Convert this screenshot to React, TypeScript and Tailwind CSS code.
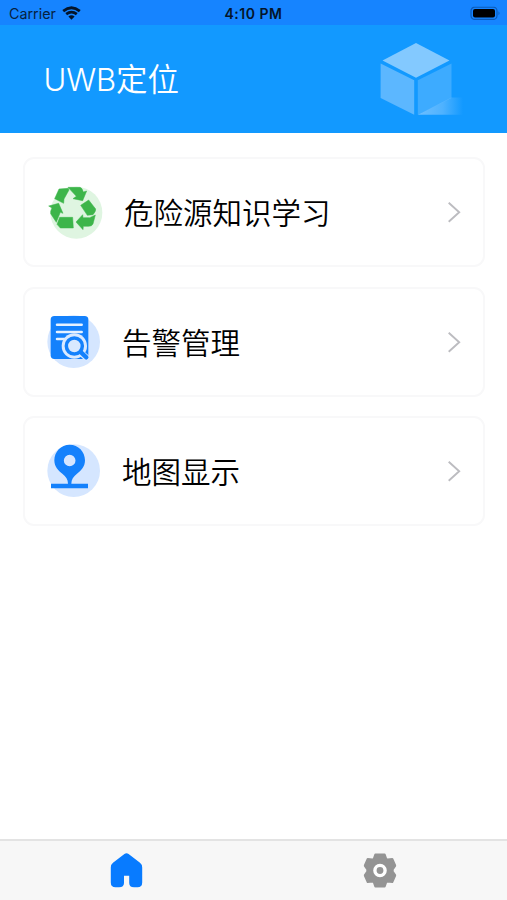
import type { ReactNode } from "react";

function RecycleIcon() {
  return (
    <svg className="h-[55px] w-[56px]" viewBox="96 105 168 165">
      <circle cx="184" cy="188" r="78" fill="#dff5e1" />
      <g transform="translate(87 90)" fill="#3db54a" stroke="#3db54a" strokeWidth="1.5" strokeLinejoin="round">
        <path d="M45 27 L73 25 L75 30 L60 57 L59 70 L32 56 Z" />
        <path d="M72 22 L108 22 Q114 23 118 36 L128 33 L116 62 L87 56 L97 49 Z" />
        <path d="M110 76 L134 60 L155 87 Q156 94 147 104 L130 106 Z" />
        <path d="M154 105 L147 132 Q144 139 134 139 L118 139 L117 149 L96 126 L116 104 L117 113 L137 113 Z" />
        <path d="M47 112 L86 112 L88 144 L49 144 L39 133 Z" />
        <path d="M14 78 L44 70 L57 100 L49 97 L37 127 L20 101 Q18 95 24 84 Z" />
      </g>
    </svg>
  );
}

function AlarmIcon() {
  return (
    <svg className="h-[55px] w-[56px] translate-y-[1px]" viewBox="96 105 168 165">
      <circle cx="176" cy="185" r="79" fill="#d5e6ff" />
      <rect x="107" y="108" width="113" height="129" rx="11" fill="#1481fc" />
      <g stroke="#e6f1ff" strokeWidth="7.5" strokeLinecap="round">
        <path d="M126 134 H200" />
        <path d="M126 156 H200" />
        <path d="M126 177 H152" />
      </g>
      <circle cx="178" cy="198" r="38" fill="#d9e9ff" />
      <path d="M193 214 L214 233" stroke="#d9e9ff" strokeWidth="19" strokeLinecap="round" />
      <path d="M195 214 L214 232" stroke="#1481fc" strokeWidth="13" strokeLinecap="round" />
      <circle cx="178" cy="198" r="24" fill="#d9e9ff" stroke="#1481fc" strokeWidth="10.5" />
    </svg>
  );
}

function MapIcon() {
  return (
    <svg className="h-[55px] w-[56px]" viewBox="96 105 168 165">
      <circle cx="176" cy="185" r="79" fill="#d5e6ff" />
      <path
        fill="#1481fc"
        fillRule="evenodd"
        transform="translate(0 1)"
        d="M164 106 C138 106 118 127 118 153 C118 173 130 184 142 193 C153 202 159 210 159 223 H108 V237 H219 V223 H169 C169 210 175 202 186 193 C198 184 210 173 210 153 C210 127 190 106 164 106 Z M164 136 A17.5 17.5 0 1 1 164 171 A17.5 17.5 0 1 1 164 136 Z"
      />
    </svg>
  );
}

function MenuCard({ icon, label, indent }: { icon: ReactNode; label: string; indent: string }) {
  return (
    <button className="flex h-[110px] w-full items-center rounded-[11px] border-2 border-[#f8f8f9] bg-white pr-[21.5px] pl-[22.5px] text-left">
      {icon}
      <span className={`${indent} flex-1 pb-[2px] text-[29.5px] leading-[44px] font-[350] text-black`}>{label}</span>
      <svg className="h-[22px] w-[14px]" viewBox="0 0 14 22" fill="none" stroke="#bcbcc0" strokeWidth="1.9">
        <path d="M1.7 1.8 L12.2 11.3 L1.7 20.8" />
      </svg>
    </button>
  );
}

function StatusBar() {
  return (
    <div className="grid h-[25px] grid-cols-3 items-center bg-[#1684ff] pt-[3px] text-[#06223f]">
      <div className="flex items-center gap-[6px] pl-[9px] font-['Inter'] text-[14.3px] leading-none">
        <span>Carrier</span>
        <svg className="h-[14px] w-[19px] -translate-y-[1px]" viewBox="0 0 19 14" fill="none" stroke="#04152a" strokeWidth="2.8">
          <path d="M1.2 5.1 Q9.5 -1.5 17.8 5.1" />
          <path d="M4.2 8.2 Q9.5 4 14.8 8.2" />
          <path d="M6.4 10.5 Q9.5 8.2 12.6 10.5 L9.5 13.7 Z" fill="#04152a" stroke="none" />
        </svg>
      </div>
      <div className="text-center font-['Inter'] text-[14px] leading-none font-semibold tracking-[0.5px] text-[#04152a]">4:10 PM</div>
      <div className="flex justify-end pr-[6px]">
        <svg className="h-[14px] w-[31px] -translate-y-[0.5px]" viewBox="0 0 31 14">
          <rect x="1" y="0.7" width="26" height="12.2" rx="3.7" fill="none" stroke="#0c5bb8" strokeWidth="1.2" />
          <rect x="3" y="2.6" width="22" height="8.5" rx="2" fill="#000" />
          <path d="M28.5 4.8 Q30.5 6.7 28.5 8.7 Z" fill="#0c5bb8" />
        </svg>
      </div>
    </div>
  );
}

function CubeArt() {
  return (
    <svg className="h-[76px] w-[86px] translate-y-[1px]" viewBox="0 0 86 76">
      <defs>
        <linearGradient id="shade" x1="39" y1="0" x2="84" y2="0" gradientUnits="userSpaceOnUse">
          <stop offset="0" stopColor="#8bcbff" stopOpacity="0.75" />
          <stop offset="0.55" stopColor="#8bcbff" stopOpacity="0.5" />
          <stop offset="1" stopColor="#8bcbff" stopOpacity="0" />
        </linearGradient>
      </defs>
      <path d="M37 1 L70.5 18.6 L37 35.8 L3.5 18.6 Z" fill="#83c9ff" />
      <path d="M1.6 21.5 L35.2 38.3 V72.8 L1.6 56 Z" fill="#5cb7ff" />
      <path d="M38.8 38.3 L72.5 21.5 V56 L38.8 72.8 Z" fill="#3dabff" />
      <path d="M38.8 72.8 L72.5 55.5 H84 V72.8 Z" fill="url(#shade)" />
    </svg>
  );
}

export default function App() {
  return (
    <div className="flex h-[900px] w-[507px] flex-col overflow-hidden bg-white font-['Noto_Sans_CJK_SC',sans-serif]">
      <StatusBar />
      <header className="flex h-[108px] items-center justify-between bg-[#1299ff] pr-[42px] pl-[43.5px]">
        <h1 className="pb-[1px] text-[31.5px] leading-[46px] font-[350] text-white">
          <span className="font-['Inter'] text-[31px] font-light tracking-[-0.1px]">UWB</span>定位
        </h1>
        <CubeArt />
      </header>
      <main className="flex flex-1 flex-col gap-[19.7px] px-[22.5px] pt-[24px]">
        <MenuCard icon={<RecycleIcon />} label="危险源知识学习" indent="ml-[21px]" />
        <MenuCard icon={<AlarmIcon />} label="告警管理" indent="ml-[19px]" />
        <MenuCard icon={<MapIcon />} label="地图显示" indent="ml-[19px]" />
      </main>
      <nav className="grid h-[61px] grid-cols-2 border-t-2 border-[#e3e3e3] bg-[#f7f7f7]">
        <button className="flex justify-center pt-[11px]">
          <svg className="h-[37px] w-[33px]" viewBox="0 0 33 37">
            <path
              fill="#087bff"
              d="M14.4 2.1 Q16.5 0.5 18.6 2.1 L30 10.8 Q32.2 12.5 32.2 15.4 V30.5 Q32.2 35.2 27.5 35.2 H24 Q19.2 35.2 19.2 31 V23.8 H14 V31 Q14 35.2 9 35.2 H5.5 Q0.8 35.2 0.8 30.5 V15.4 Q0.8 12.5 3 10.8 Z"
            />
          </svg>
        </button>
        <button className="flex justify-center pt-[12px]">
          <svg className="h-[35px] w-[33px] -translate-x-[0.5px]" viewBox="0 0 33 35">
            <path
              fill="#949494"
              stroke="#949494"
              strokeWidth="2"
              strokeLinejoin="round"
              d="M11.8 1.5 H21.2 L22.8 6 L24.2 6.6 L28.8 6 L31.8 12.6 L29.2 16.4 V18.6 L31.8 22.4 L28.8 29 L24.2 28.4 L22.8 29 L21.2 33.5 H11.8 L10.2 29 L8.8 28.4 L4.2 29 L1.2 22.4 L3.8 18.6 V16.4 L1.2 12.6 L4.2 6 L8.8 6.6 L10.2 6 Z"
            />
            <circle cx="16.5" cy="17.5" r="5.1" fill="#949494" stroke="#ffffff" strokeWidth="3.4" />
          </svg>
        </button>
      </nav>
    </div>
  );
}
